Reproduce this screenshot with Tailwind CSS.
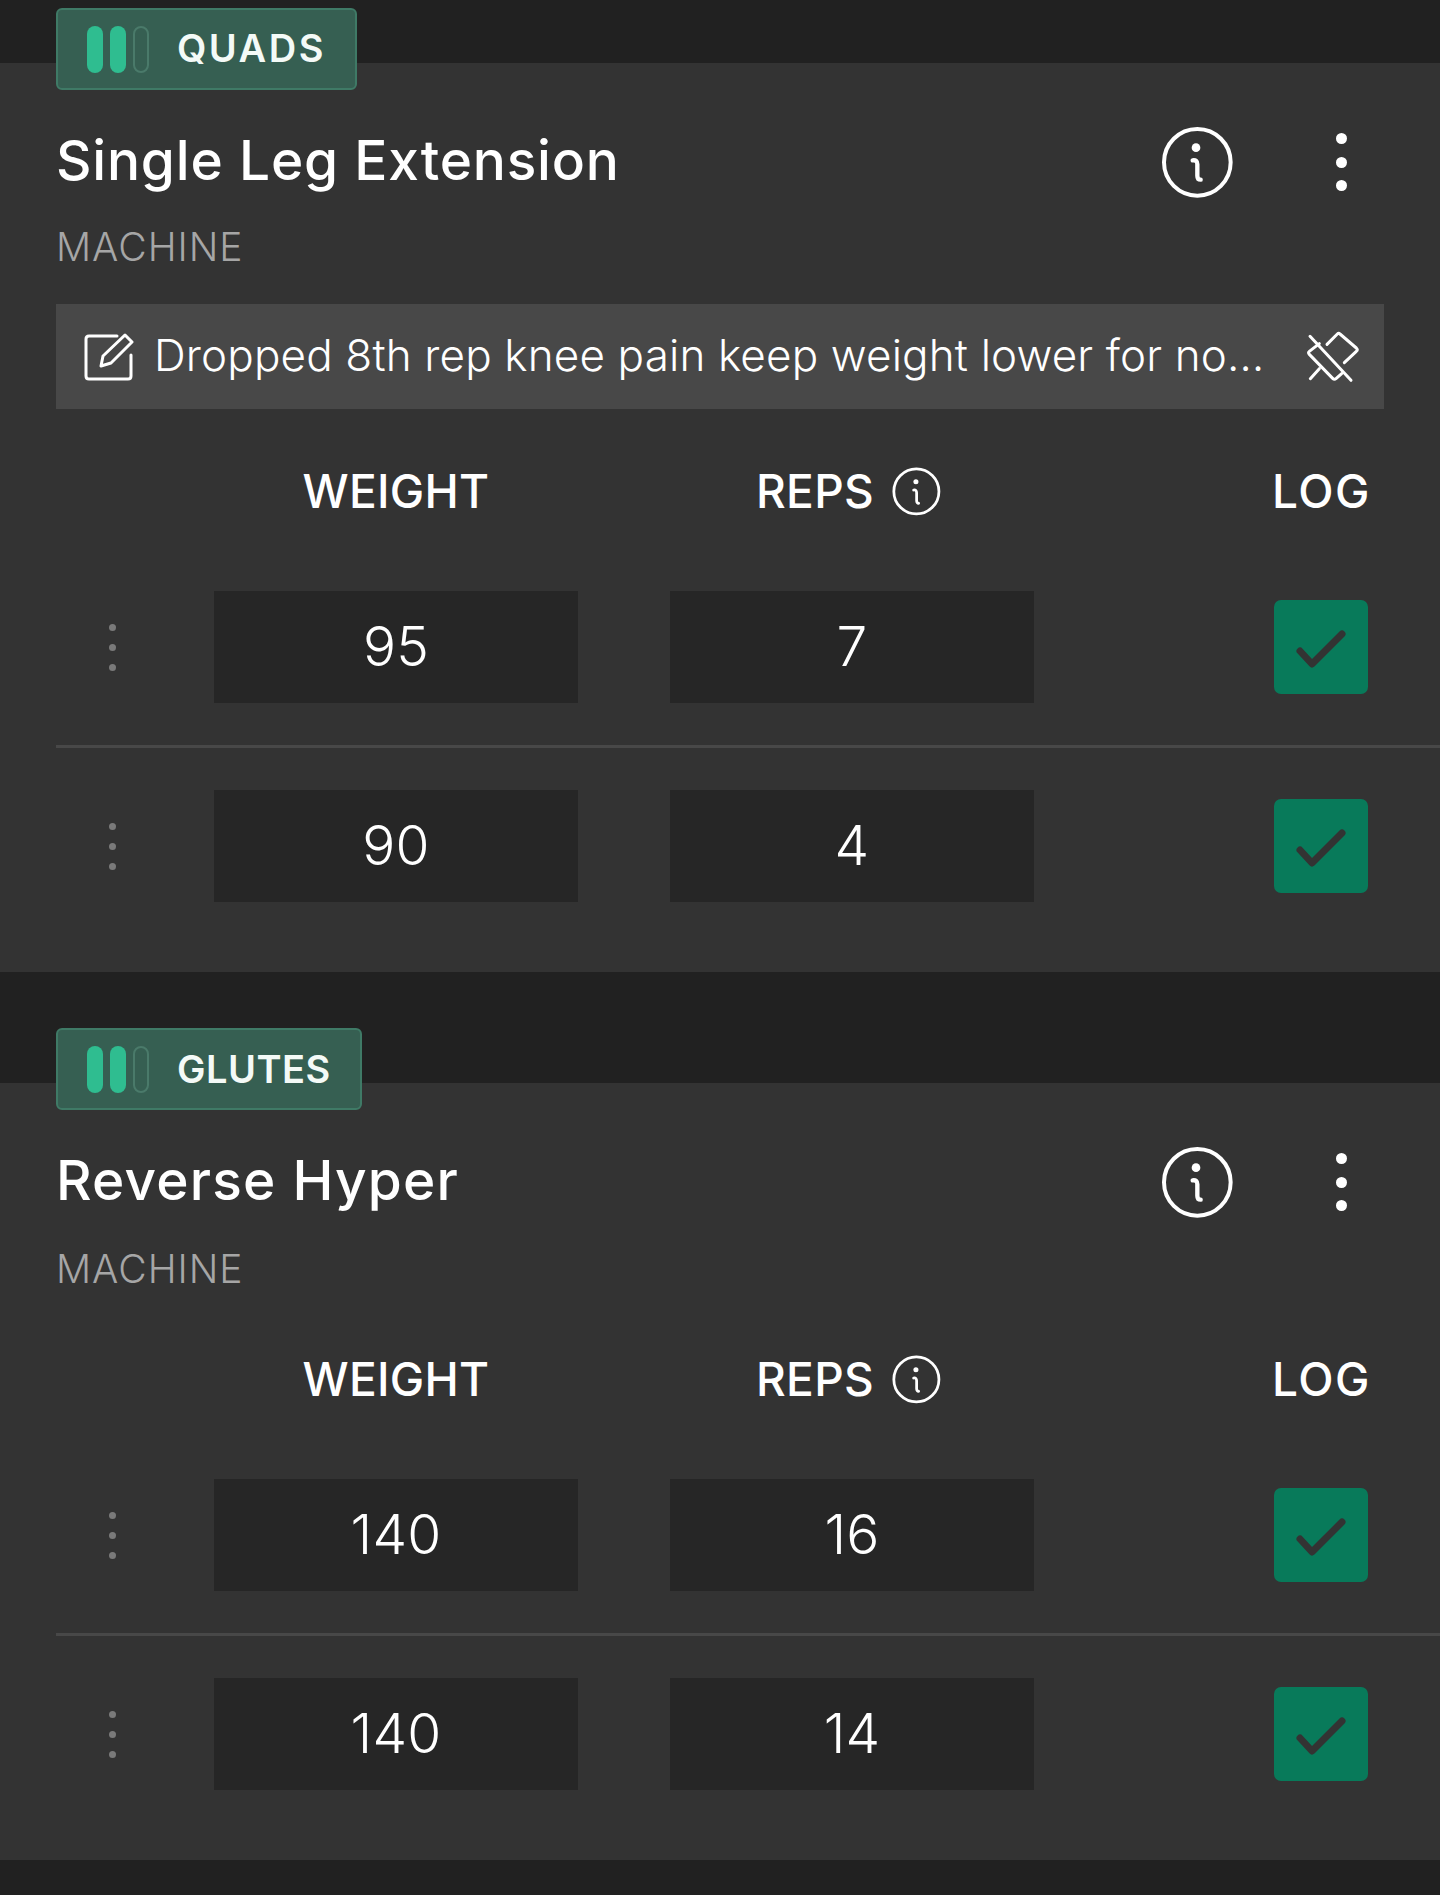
<!DOCTYPE html>
<html lang="en">
<head>
<meta charset="UTF-8">
<script src="https://cdn.jsdelivr.net/npm/@tailwindcss/browser@4"></script>
<title>Workout</title>
</head>
<body class="bg-[#212121] text-white font-[Inter,sans-serif] w-[1440px] h-[1895px] overflow-hidden">

<!-- Quads -->
<section class="flow-root mt-[63px] bg-[#333333] pl-[56px] pr-[56px] pb-[70px]">
  <div class="-mt-[55px] w-[301px] h-[82px] flex items-center pl-[29px] gap-[28px] bg-[#365f52] border-2 border-[#3f7a66] rounded-[6px]">
    <div class="flex gap-[7px]">
      <span class="w-[16px] h-[47px] rounded-full bg-[#2fbd90]"></span>
      <span class="w-[16px] h-[47px] rounded-full bg-[#2fbd90]"></span>
      <span class="w-[16px] h-[47px] rounded-full border-2 border-[#4a7a6a]"></span>
    </div>
    <span class="pb-[2px] text-[38px] font-semibold tracking-[2.5px] text-[#f4faf7]">QUADS</span>
  </div>

  <div class="mt-[36px] h-[72px] flex items-center">
    <h2 class="flex-1 pb-[3px] text-[55px] font-medium tracking-[0.8px] leading-none">Single Leg Extension</h2>
    <svg class="w-[71px] h-[71px]" viewBox="0 0 213 213" fill="none" stroke="#fff" stroke-linecap="round"><circle cx="106" cy="106" r="100" stroke-width="12"/><circle cx="102" cy="62" r="13" fill="#fff" stroke="none"/><path d="M92 100Q106 98 106 112V146Q106 158 116 158" stroke-width="13"/></svg>
    <div class="w-[152px] mr-[-1px] flex flex-col items-center gap-[12.5px] pl-[64px]">
      <span class="w-[11px] h-[11px] rounded-full bg-white"></span>
      <span class="w-[11px] h-[11px] rounded-full bg-white"></span>
      <span class="w-[11px] h-[11px] rounded-full bg-white"></span>
    </div>
  </div>
  <p class="mt-[27px] h-[44px] leading-[44px] text-[39px] font-light tracking-[1px] text-[#a6a6a6]">MACHINE</p>

  <div class="mt-[35px] h-[105px] bg-[#484848] flex items-center pl-[28px] pr-[24px]">
    <svg class="w-[50px] h-[48px] shrink-0" viewBox="0 0 50 48" fill="none" stroke="#fff" stroke-width="3" stroke-linejoin="round" stroke-linecap="round"><path d="M33 3H5Q2 3 2 6V43Q2 46 5 46H44Q47 46 47 43V22"/><path d="M17 33L19 23L41 2L48 9L27 30Z"/></svg>
    <p class="ml-[20px] pb-[3px] flex-1 text-[44px] font-light tracking-[0.15px] whitespace-nowrap overflow-hidden">Dropped 8th rep knee pain keep weight lower for no…</p>
    <svg class="w-[54px] h-[54px] shrink-0" viewBox="0 0 162 162" fill="none" stroke="#fff" stroke-width="9" stroke-linecap="round" stroke-linejoin="round"><path d="M12 19L135 151"/><path d="M63 43L94 12Q98 8 102 12L151 54Q157 60 151 64L115 98"/><path d="M40 41L10 64Q5 68 10 73L80 145Q85 150 90 146L107 131"/><path d="M40 116L13 146"/></svg>
  </div>

  <div class="mt-[57px] h-[50px] grid grid-cols-[158px_364px_92px_364px_240px_94px] items-center text-[46px] leading-[50px] font-medium tracking-[0.3px]">
    <span></span>
    <span class="text-center">WEIGHT</span>
    <span></span>
    <span class="flex items-center justify-center gap-[18px] pr-[7px]">REPS
      <svg class="w-[49px] h-[49px]" viewBox="0 0 213 213" fill="none" stroke="#fff" stroke-linecap="round"><circle cx="106" cy="106" r="98" stroke-width="12"/><circle cx="104" cy="64" r="11" fill="#fff" stroke="none"/><path d="M94 100Q107 98 107 112V146Q107 158 116 158" stroke-width="12"/></svg>
    </span>
    <span></span>
    <span class="text-center whitespace-nowrap -ml-[2px] tracking-[1.5px]">LOG</span>
  </div>

  <div class="mt-[75px] h-[112px] grid grid-cols-[158px_364px_92px_364px_240px_94px] items-center">
    <div class="w-[112px] flex flex-col items-center gap-[13px]">
      <span class="w-[7px] h-[7px] rounded-full bg-[#7a7a7a]"></span>
      <span class="w-[7px] h-[7px] rounded-full bg-[#7a7a7a]"></span>
      <span class="w-[7px] h-[7px] rounded-full bg-[#7a7a7a]"></span>
    </div>
    <div class="h-[112px] bg-[#262626] flex items-center justify-center pb-[1px] text-[55px] font-[350] tracking-[0.2px]">95</div>
    <span></span>
    <div class="h-[112px] bg-[#262626] flex items-center justify-center pb-[1px] text-[55px] font-[350] tracking-[0.2px]">7</div>
    <span></span>
    <div class="w-[94px] h-[94px] rounded-[7px] bg-[#087a5a]">
      <svg class="w-[94px] h-[94px]" viewBox="0 0 94 94" fill="none" stroke="#333" stroke-width="7" stroke-linecap="round" stroke-linejoin="round"><path d="M26 51L38 64L68 34"/></svg>
    </div>
  </div>
  <div class="mt-[42px] h-[3px] -mr-[56px] bg-[#484848]"></div>
  <div class="mt-[42px] h-[112px] grid grid-cols-[158px_364px_92px_364px_240px_94px] items-center">
    <div class="w-[112px] flex flex-col items-center gap-[13px]">
      <span class="w-[7px] h-[7px] rounded-full bg-[#7a7a7a]"></span>
      <span class="w-[7px] h-[7px] rounded-full bg-[#7a7a7a]"></span>
      <span class="w-[7px] h-[7px] rounded-full bg-[#7a7a7a]"></span>
    </div>
    <div class="h-[112px] bg-[#262626] flex items-center justify-center pb-[1px] text-[55px] font-[350] tracking-[0.2px]">90</div>
    <span></span>
    <div class="h-[112px] bg-[#262626] flex items-center justify-center pb-[1px] text-[55px] font-[350] tracking-[0.2px]">4</div>
    <span></span>
    <div class="w-[94px] h-[94px] rounded-[7px] bg-[#087a5a]">
      <svg class="w-[94px] h-[94px]" viewBox="0 0 94 94" fill="none" stroke="#333" stroke-width="7" stroke-linecap="round" stroke-linejoin="round"><path d="M26 51L38 64L68 34"/></svg>
    </div>
  </div>
</section>

<!-- Glutes -->
<section class="flow-root mt-[111px] bg-[#333333] pl-[56px] pr-[56px] pb-[70px]">
  <div class="-mt-[55px] w-[306px] h-[82px] flex items-center pl-[29px] gap-[28px] bg-[#365f52] border-2 border-[#3f7a66] rounded-[6px]">
    <div class="flex gap-[7px]">
      <span class="w-[16px] h-[47px] rounded-full bg-[#2fbd90]"></span>
      <span class="w-[16px] h-[47px] rounded-full bg-[#2fbd90]"></span>
      <span class="w-[16px] h-[47px] rounded-full border-2 border-[#4a7a6a]"></span>
    </div>
    <span class="text-[38px] font-semibold tracking-[0.5px] text-[#f4faf7]">GLUTES</span>
  </div>

  <div class="mt-[36px] h-[72px] flex items-center">
    <h2 class="flex-1 pb-[3px] text-[55px] font-medium tracking-[1.2px] leading-none">Reverse Hyper</h2>
    <svg class="w-[71px] h-[71px]" viewBox="0 0 213 213" fill="none" stroke="#fff" stroke-linecap="round"><circle cx="106" cy="106" r="100" stroke-width="12"/><circle cx="102" cy="62" r="13" fill="#fff" stroke="none"/><path d="M92 100Q106 98 106 112V146Q106 158 116 158" stroke-width="13"/></svg>
    <div class="w-[152px] mr-[-1px] flex flex-col items-center gap-[12.5px] pl-[64px]">
      <span class="w-[11px] h-[11px] rounded-full bg-white"></span>
      <span class="w-[11px] h-[11px] rounded-full bg-white"></span>
      <span class="w-[11px] h-[11px] rounded-full bg-white"></span>
    </div>
  </div>
  <p class="mt-[29px] h-[44px] leading-[44px] text-[39px] font-light tracking-[1px] text-[#a6a6a6]">MACHINE</p>

  <div class="mt-[63px] h-[50px] grid grid-cols-[158px_364px_92px_364px_240px_94px] items-center text-[46px] leading-[50px] font-medium tracking-[0.3px]">
    <span></span>
    <span class="text-center">WEIGHT</span>
    <span></span>
    <span class="flex items-center justify-center gap-[18px] pr-[7px]">REPS
      <svg class="w-[49px] h-[49px]" viewBox="0 0 213 213" fill="none" stroke="#fff" stroke-linecap="round"><circle cx="106" cy="106" r="98" stroke-width="12"/><circle cx="104" cy="64" r="11" fill="#fff" stroke="none"/><path d="M94 100Q107 98 107 112V146Q107 158 116 158" stroke-width="12"/></svg>
    </span>
    <span></span>
    <span class="text-center whitespace-nowrap -ml-[2px] tracking-[1.5px]">LOG</span>
  </div>

  <div class="mt-[75px] h-[112px] grid grid-cols-[158px_364px_92px_364px_240px_94px] items-center">
    <div class="w-[112px] flex flex-col items-center gap-[13px]">
      <span class="w-[7px] h-[7px] rounded-full bg-[#7a7a7a]"></span>
      <span class="w-[7px] h-[7px] rounded-full bg-[#7a7a7a]"></span>
      <span class="w-[7px] h-[7px] rounded-full bg-[#7a7a7a]"></span>
    </div>
    <div class="h-[112px] bg-[#262626] flex items-center justify-center pb-[1px] text-[55px] font-[350] tracking-[0.2px]">140</div>
    <span></span>
    <div class="h-[112px] bg-[#262626] flex items-center justify-center pb-[1px] text-[55px] font-[350] tracking-[0.2px]">16</div>
    <span></span>
    <div class="w-[94px] h-[94px] rounded-[7px] bg-[#087a5a]">
      <svg class="w-[94px] h-[94px]" viewBox="0 0 94 94" fill="none" stroke="#333" stroke-width="7" stroke-linecap="round" stroke-linejoin="round"><path d="M26 51L38 64L68 34"/></svg>
    </div>
  </div>
  <div class="mt-[42px] h-[3px] -mr-[56px] bg-[#484848]"></div>
  <div class="mt-[42px] h-[112px] grid grid-cols-[158px_364px_92px_364px_240px_94px] items-center">
    <div class="w-[112px] flex flex-col items-center gap-[13px]">
      <span class="w-[7px] h-[7px] rounded-full bg-[#7a7a7a]"></span>
      <span class="w-[7px] h-[7px] rounded-full bg-[#7a7a7a]"></span>
      <span class="w-[7px] h-[7px] rounded-full bg-[#7a7a7a]"></span>
    </div>
    <div class="h-[112px] bg-[#262626] flex items-center justify-center pb-[1px] text-[55px] font-[350] tracking-[0.2px]">140</div>
    <span></span>
    <div class="h-[112px] bg-[#262626] flex items-center justify-center pb-[1px] text-[55px] font-[350] tracking-[0.2px]">14</div>
    <span></span>
    <div class="w-[94px] h-[94px] rounded-[7px] bg-[#087a5a]">
      <svg class="w-[94px] h-[94px]" viewBox="0 0 94 94" fill="none" stroke="#333" stroke-width="7" stroke-linecap="round" stroke-linejoin="round"><path d="M26 51L38 64L68 34"/></svg>
    </div>
  </div>
</section>

</body>
</html>
